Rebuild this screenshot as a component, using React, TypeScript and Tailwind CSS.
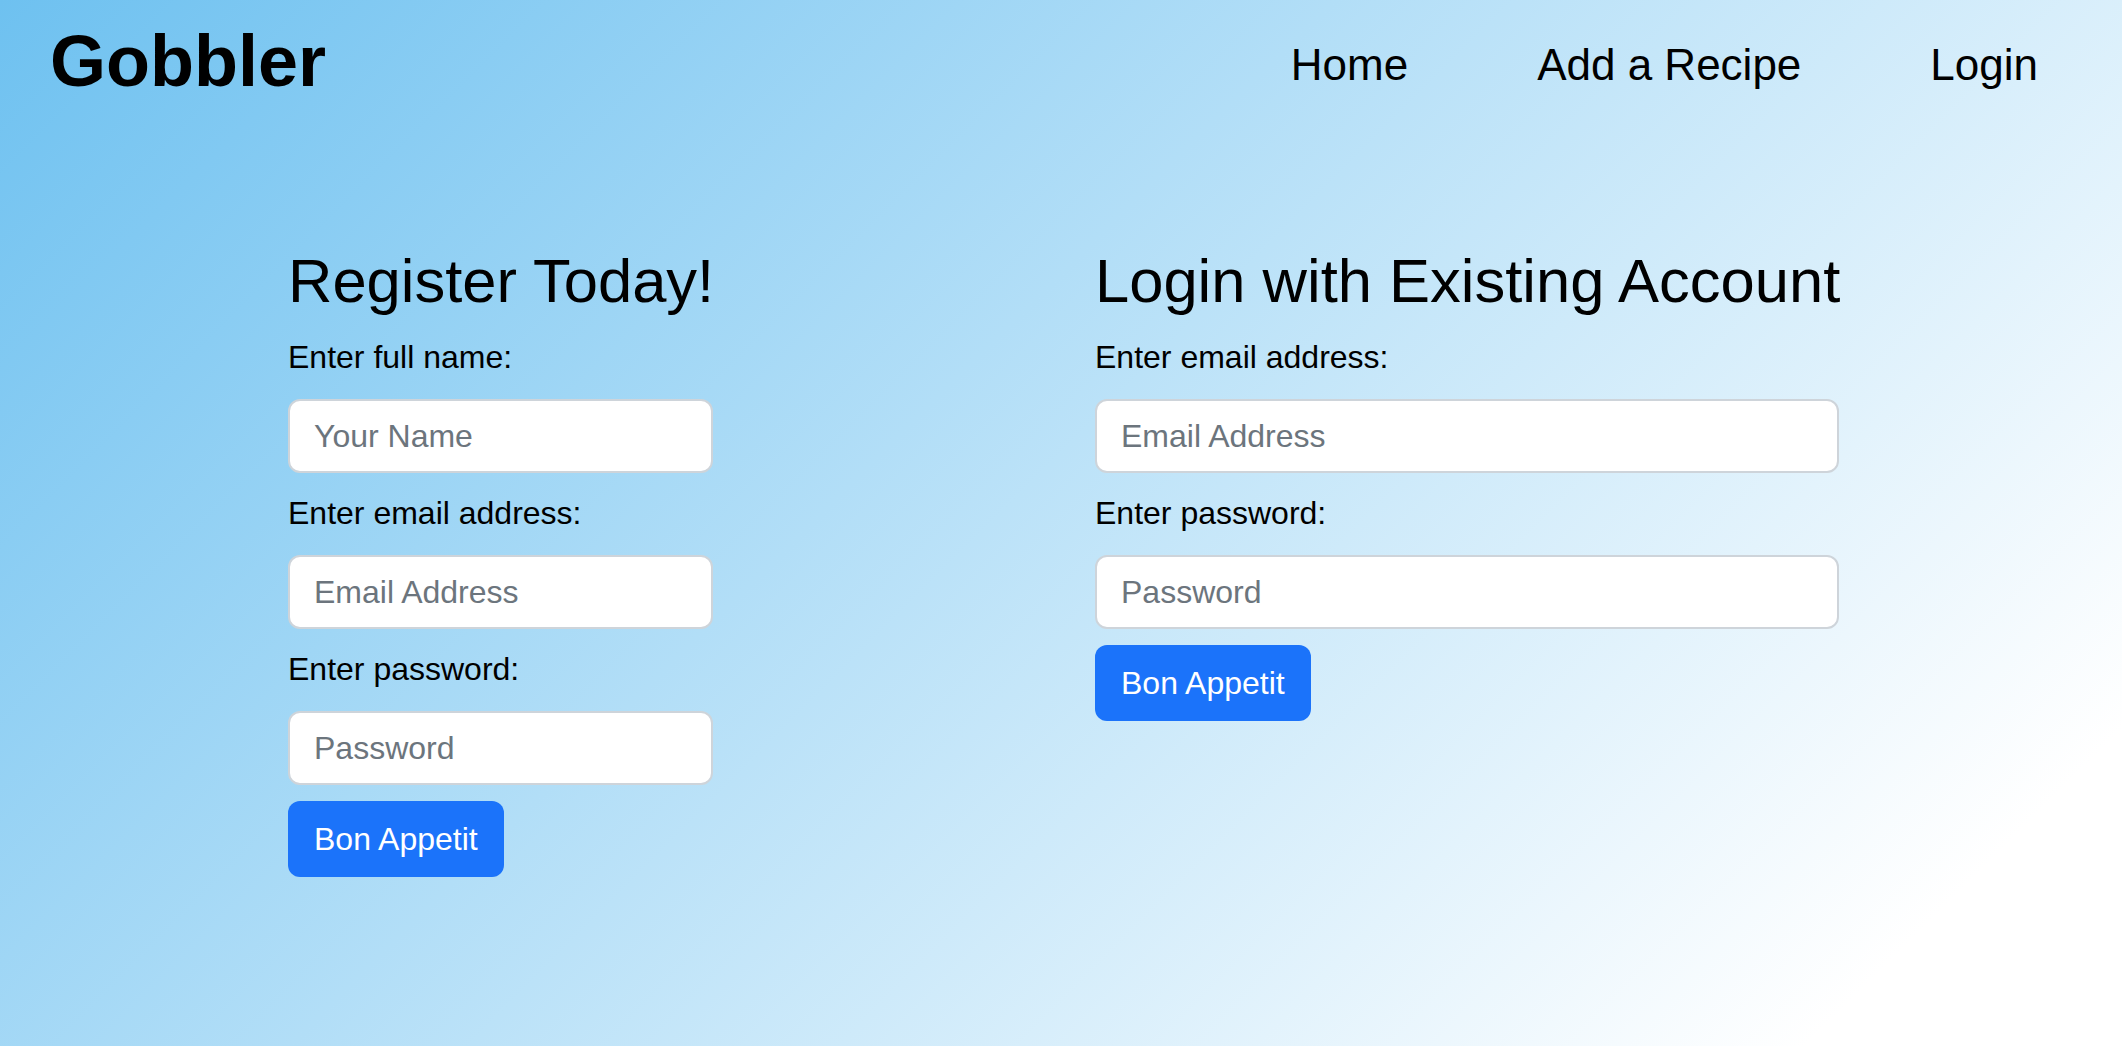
import React from 'react';

const Field: React.FC<{ label: string; placeholder: string; type?: string }> = ({ label, placeholder, type = 'text' }) => {
  return (
    <div>
      <label className="block text-[32px] leading-[48px] mb-[18px] text-black">{label}</label>
      <input
        type={type}
        placeholder={placeholder}
        className="block w-full min-w-0 h-[74px] mb-[16px] px-[24px] bg-white border-2 border-[#ced4da] rounded-[12px] text-[32px] text-[#212529] placeholder:text-[#6c757d] outline-none"
      />
    </div>
  );
};

const SubmitButton: React.FC = () => {
  return (
    <button
      type="submit"
      className="h-[76px] px-[26px] bg-[#1b73fa] text-white text-[32px] rounded-[12px]"
    >
      Bon Appetit
    </button>
  );
};

const App: React.FC = () => {
  return (
    <div
      className="min-h-screen w-full bg-[linear-gradient(135deg,#6ec1f0_0%,#ffffff_90%)] text-black"
      style={{ fontFamily: '"Liberation Sans", Arial, sans-serif' }}
    >
      <header className="flex justify-between items-start h-[97px]">
        <div className="pl-[50px] pt-[25px] text-[72px] leading-none font-bold">Gobbler</div>
        <nav className="flex gap-[129px] pr-[84px] mt-[43px] text-[44px] leading-none">
          <a href="#" className="text-black">Home</a>
          <a href="#" className="text-black">Add a Recipe</a>
          <a href="#" className="text-black">Login</a>
        </nav>
      </header>

      <main className="flex justify-center items-start gap-[382px] pt-[148px] pl-[5px]">
        <form className="w-[425px] shrink-0">
          <h2 className="text-[61.5px] leading-[72px] mb-[16px] whitespace-nowrap">Register Today!</h2>
          <Field label="Enter full name:" placeholder="Your Name" />
          <Field label="Enter email address:" placeholder="Email Address" type="email" />
          <Field label="Enter password:" placeholder="Password" type="password" />
          <SubmitButton />
        </form>

        <form className="w-[744px] shrink-0">
          <h2 className="text-[61.5px] leading-[72px] mb-[16px] whitespace-nowrap">Login with Existing Account</h2>
          <Field label="Enter email address:" placeholder="Email Address" type="email" />
          <Field label="Enter password:" placeholder="Password" type="password" />
          <SubmitButton />
        </form>
      </main>
    </div>
  );
};

export default App;
